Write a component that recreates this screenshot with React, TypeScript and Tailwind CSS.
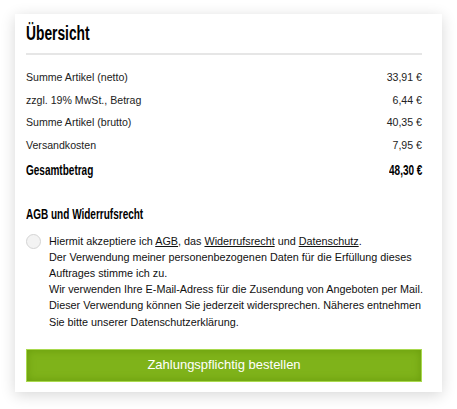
const rows = [
  { label: 'Summe Artikel (netto)', value: '33,91 €' },
  { label: 'zzgl. 19% MwSt., Betrag', value: '6,44 €' },
  { label: 'Summe Artikel (brutto)', value: '40,35 €' },
  { label: 'Versandkosten', value: '7,95 €' },
]

// condensed display face (Oswald-like) approximated by squeezing Liberation Sans Bold
const cond = "inline-block whitespace-nowrap font-bold text-black scale-x-[0.69]"

export default function App() {
  return (
    <div className="min-h-[409px] bg-white pt-[14px] pl-[15px] font-['Liberation_Sans',Arial,sans-serif]">
      <div className="flex h-[378px] w-[427px] flex-col bg-white pl-[11px] pr-[20px] pt-[6px] shadow-[0_3px_14px_rgba(0,0,0,0.16)]">
        <h2 className="h-[26px] text-[20px] leading-[26px]">
          <span className={`${cond} origin-left`}>Übersicht</span>
        </h2>
        <div className="mt-[7px] h-[2px] bg-[#e6e6e6]" />

        <div className="mt-[12px] flex flex-col text-[10.6px] text-[#222]">
          {rows.map((r) => (
            <div key={r.label} className="flex h-[22.5px] items-center justify-between">
              <span>{r.label}</span>
              <span>{r.value}</span>
            </div>
          ))}
          <div className="mt-[3px] flex h-[22.5px] items-center justify-between text-[14.5px]">
            <span className={`${cond} origin-left`}>Gesamtbetrag</span>
            <span className={`${cond} origin-right`}>48,30 €</span>
          </div>
        </div>

        <h3 className="mt-[22px] text-[14.5px] leading-[18px]">
          <span className={`${cond} origin-left`}>AGB und Widerrufsrecht</span>
        </h3>

        <div className="mt-[10px] flex gap-[8px]">
          <span className="mt-[1px] h-[15px] w-[15px] shrink-0 rounded-full border border-[#d4d4d4] bg-[#f3f3f3]" />
          <p className="whitespace-nowrap text-[10.8px] leading-[16.2px] text-[#111]">
            Hiermit akzeptiere ich <span className="underline">AGB</span>, das{' '}
            <span className="underline">Widerrufsrecht</span> und <span className="underline">Datenschutz</span>.
            <br />
            Der Verwendung meiner personenbezogenen Daten für die Erfüllung dieses
            <br />
            Auftrages stimme ich zu.
            <br />
            Wir verwenden Ihre E-Mail-Adress für die Zusendung von Angeboten per Mail.
            <br />
            Dieser Verwendung können Sie jederzeit widersprechen. Näheres entnehmen
            <br />
            Sie bitte unserer Datenschutzerklärung.
          </p>
        </div>

        <button className="mt-[19px] h-[33px] w-full border border-[#a9d94e] bg-[#7fb31a] text-[13px] text-white shadow-[inset_0_0_8px_rgba(90,140,0,0.6)]">
          Zahlungspflichtig bestellen
        </button>
      </div>
    </div>
  )
}
